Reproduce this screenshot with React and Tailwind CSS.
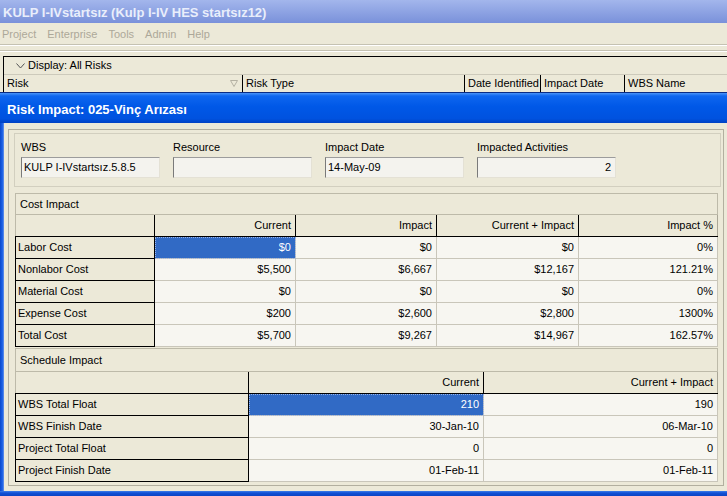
import React from "react";

const costRows = [
  { label: "Labor Cost", values: ["$0", "$0", "$0", "0%"], selected: 0 },
  { label: "Nonlabor Cost", values: ["$5,500", "$6,667", "$12,167", "121.21%"] },
  { label: "Material Cost", values: ["$0", "$0", "$0", "0%"] },
  { label: "Expense Cost", values: ["$200", "$2,600", "$2,800", "1300%"] },
  { label: "Total Cost", values: ["$5,700", "$9,267", "$14,967", "162.57%"] },
];

const scheduleRows = [
  { label: "WBS Total Float", values: ["210", "190"], selected: 0 },
  { label: "WBS Finish Date", values: ["30-Jan-10", "06-Mar-10"] },
  { label: "Project Total Float", values: ["0", "0"] },
  { label: "Project Finish Date", values: ["01-Feb-11", "01-Feb-11"] },
];

const costCols = ["w-[141px]", "w-[141px]", "w-[142px]", "w-[139px]"];
const schedCols = ["w-[235px]", "w-[234px]"];

const Field = ({ label, value, right }) => (
  <div className="w-[139px]">
    <div className="h-[13px]">{label}</div>
    <div
      className={
        "mt-[3px] h-[21px] flex items-center px-[2px] bg-[#f4f3ee] border border-t-[#9c9c9c] border-l-[#7a7a7a] border-r-[#e4e1d5] border-b-[#e4e1d5] " +
        (right ? "justify-end pr-[4px]" : "")
      }
    >
      {value}
    </div>
  </div>
);

const SectionHeader = ({ title, tall }) => (
  <div
    className={
      "flex items-center pl-[4px] border border-[#bdbaa9] " + (tall ? "h-[24px]" : "h-[22px]")
    }
  >
    {title}
  </div>
);

const Grid = ({ labelW, cols, headers, rows }) => (
  <div>
    <div className="h-[22px] flex border-b border-black">
      <div className={labelW + " border-l border-l-[#bdbaa9] border-r border-r-black"} />
      {headers.map((h, i) => (
        <div
          key={h}
          className={
            cols[i] +
            " flex items-center justify-end pr-[4px] border-r " +
            (i === headers.length - 1 ? "border-r-[#a9a696]" : "border-r-black")
          }
        >
          {h}
        </div>
      ))}
    </div>
    {rows.map((r) => (
      <div key={r.label} className="h-[22px] flex">
        <div className={labelW + " flex items-center pl-[2px] border-l border-r border-b border-black"}>
          {r.label}
        </div>
        {r.values.map((v, i) =>
          r.selected === i ? (
            <div
              key={i}
              className={
                cols[i] +
                " flex items-center justify-end pr-[4px] bg-[#316ac5] text-white border-r border-b border-[#c9c6ba] outline-1 outline-dotted outline-[#9bb4e4] -outline-offset-1"
              }
            >
              {v}
            </div>
          ) : (
            <div
              key={i}
              className={
                cols[i] +
                " flex items-center justify-end pr-[4px] bg-[#f7f6f1] border-r border-b border-[#c9c6ba]"
              }
            >
              {v}
            </div>
          )
        )}
      </div>
    ))}
  </div>
);

export default function App() {
  return (
    <div className="w-[727px] h-[496px] overflow-hidden bg-[#ece9d8] font-['Liberation_Sans',Arial,sans-serif] text-[11px] leading-[13px] text-black">
      {/* main window title (inactive) */}
      <div className="h-[23px] bg-linear-to-b from-[#a3b6ec] to-[#7a91da] flex items-center pl-[3px] pt-[2px] text-[13px] font-bold text-[#e9eefb] whitespace-nowrap">
        KULP I-IVstartsız (Kulp I-IV HES startsız12)
      </div>

      {/* menu bar */}
      <div className="h-[21px] flex items-center pl-[2px] pt-[1px] gap-[11px] text-[#aca899]">
        <span>Project</span>
        <span>Enterprise</span>
        <span>Tools</span>
        <span>Admin</span>
        <span>Help</span>
      </div>

      {/* toolbar edges */}
      <div className="h-[12px]">
        <div className="h-[1px] bg-[#c5c2b2]" />
        <div className="h-[1px] bg-white" />
        <div className="h-[4px]" />
        <div className="h-[1px] bg-[#c5c2b2]" />
        <div className="h-[1px] bg-white" />
      </div>

      {/* risks list */}
      <div className="ml-[3px] h-[36px] border-l border-t border-black">
        <div className="h-[18px] flex items-center border-b border-[#cdcabb]">
          <svg width="9" height="6" viewBox="0 0 9 6" className="ml-[12px] mr-[3px]">
            <path d="M0.5 0.5 L4.5 5 L8.5 0.5" fill="none" stroke="#555" strokeWidth="1" />
          </svg>
          <span>Display: All Risks</span>
        </div>
        <div className="h-[17px] flex whitespace-nowrap">
          <div className="w-[239px] flex items-center justify-between pl-[3px] pr-[4px] border-r border-black">
            <span>Risk</span>
            <svg width="8" height="7" viewBox="0 0 8 7">
              <path d="M0.5 0.5 L7.5 0.5 L4 6.5 Z" fill="none" stroke="#b4b1a3" strokeWidth="1" />
            </svg>
          </div>
          <div className="w-[222px] flex items-center pl-[3px] border-r border-black">Risk Type</div>
          <div className="w-[76px] flex items-center pl-[3px] border-r border-black">Date Identified</div>
          <div className="w-[84px] flex items-center pl-[3px] border-r border-black">Impact Date</div>
          <div className="flex-1 flex items-center pl-[3px]">WBS Name</div>
        </div>
      </div>

      {/* dialog */}
      <div className="h-[404px] flex flex-col border-t border-[#0a2d86]">
        <div className="h-[30px] flex items-center pl-[7px] pt-[3px] text-[13px] font-bold text-white bg-[linear-gradient(to_bottom,#4a94f8_0%,#0e66ef_10%,#0058e7_45%,#0052df_85%,#0042c4_100%)]">
          Risk Impact: 025-Vinç Arızası
        </div>
        <div className="flex-1 flex">
          <div className="w-[4px] bg-[linear-gradient(to_right,#0a48cc,#1d62e6_60%,#6b95e8)]" />
          <div className="flex-1 pt-[6px] pl-[4px] pr-[3px] pb-[5px]">
            <div className="h-full border border-[#b2af9f] pt-[3px] pl-[5px] pr-[2px]">
              {/* fields */}
              <div className="w-[707px] h-[54px] border border-[#d2cfbf] pt-[7px] pl-[6px] flex gap-[13px]">
                <Field label="WBS" value="KULP I-IVstartsız.5.8.5" />
                <Field label="Resource" value="" />
                <Field label="Impact Date" value="14-May-09" />
                <Field label="Impacted Activities" value="2" right />
              </div>

              {/* cost impact */}
              <div className="ml-[1px] mt-[6px] w-[703px]">
                <SectionHeader title="Cost Impact" />
                <Grid
                  labelW="w-[140px]"
                  cols={costCols}
                  headers={["Current", "Impact", "Current + Impact", "Impact %"]}
                  rows={costRows}
                />
              </div>

              {/* schedule impact */}
              <div className="ml-[1px] mt-[1px] w-[703px]">
                <SectionHeader title="Schedule Impact" tall />
                <Grid
                  labelW="w-[234px]"
                  cols={schedCols}
                  headers={["Current", "Current + Impact"]}
                  rows={scheduleRows}
                />
              </div>
            </div>
          </div>
        </div>
        <div className="h-[5px] bg-[linear-gradient(to_bottom,#3f7fe9,#1050d6_40%,#0a44c4)]" />
      </div>
    </div>
  );
}
